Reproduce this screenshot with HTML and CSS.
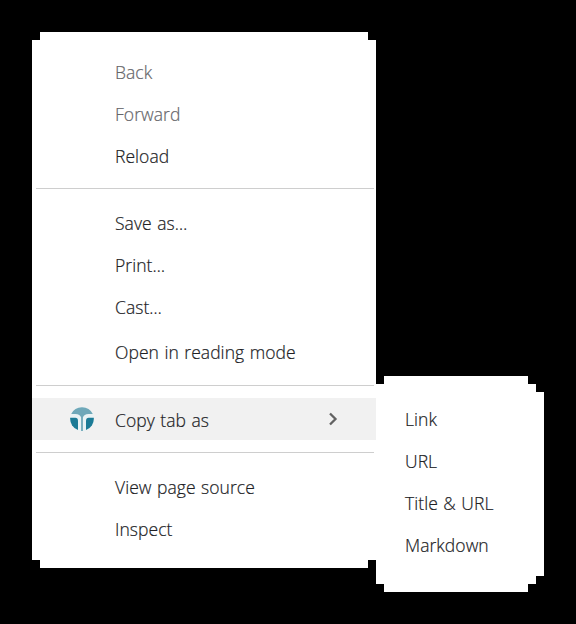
FILE: index.html
```
<!DOCTYPE html>
<html lang="en">
<head>
<meta charset="utf-8">
<title>Context menu</title>
<link rel="stylesheet" href="styles.css">
</head>
<body>
<nav class="menu">
  <div class="item disabled"><span>Back</span></div>
  <div class="item disabled"><span>Forward</span></div>
  <div class="item"><span>Reload</span></div>
  <hr class="sep">
  <div class="item"><span>Save as…</span></div>
  <div class="item"><span>Print…</span></div>
  <div class="item"><span>Cast…</span></div>
  <div class="item reading"><span>Open in reading mode</span></div>
  <hr class="sep sep-mid">
  <div class="item active">
    <svg class="logo" viewBox="0 0 24 24" width="24" height="24">
      <circle cx="12" cy="12" r="12" fill="#e9f3f5"/>
      <path fill="#6fa8b9" d="M1.2 7A12 12 0 0 1 22.8 7H18.5Q14 7 12.9 10.5V24H11.1V10.5Q10 7 5.5 7Z"/>
      <path fill="#1c7b96" d="M.2 10.7H5.3Q8 10.7 8 13.8V23A12 12 0 0 1 .2 10.7Z"/>
      <path fill="#1c7b96" d="M23.8 10.7H18.700Q16 10.7 16 13.8V23A12 12 0 0 0 23.8 10.7Z"/>
    </svg>
    <span>Copy tab as</span>
    <svg class="chevron" viewBox="0 0 10 14" width="10" height="14"><path d="M2 1.500L7.500 7l-5.500 5.500" fill="none" stroke="#626262" stroke-width="2.3"/></svg>
  </div>
  <hr class="sep sep-low">
  <div class="item"><span>View page source</span></div>
  <div class="item"><span>Inspect</span></div>
</nav>
<nav class="submenu">
  <div class="item"><span>Link</span></div>
  <div class="item"><span>URL</span></div>
  <div class="item"><span>Title &amp; URL</span></div>
  <div class="item"><span>Markdown</span></div>
</nav>
</body>
</html>
```
FILE: styles.css
```
* { box-sizing: border-box; }
body {
  margin: 0;
  width: 576px;
  height: 624px;
  padding: 32px;
  display: flex;
  align-items: flex-start;
  overflow: hidden;
  background: #000;
  color: #202124;
  font: 300 17.5px/42px "Open Sans", "Noto Sans", sans-serif;
  -webkit-text-stroke: 0.2px;
  letter-spacing: 0.05px;
  word-spacing: 0.9px;
}
.menu {
  flex: none;
  width: 344px;
  height: 536px;
  padding-top: 20px;
  background: #fff;
  clip-path: polygon(8px 0, 336px 0, 336px 8px, 344px 8px, 344px 528px, 336px 528px, 336px 536px, 8px 536px, 8px 528px, 0 528px, 0 8px, 8px 8px);
}
.submenu {
  flex: none;
  width: 168px;
  height: 216px;
  margin-top: 344px;
  padding-top: 23px;
  background: #fff;
  clip-path: polygon(8px 0, 152px 0, 152px 8px, 160px 8px, 160px 16px, 168px 16px, 168px 200px, 160px 200px, 160px 208px, 152px 208px, 152px 216px, 8px 216px, 8px 208px, 0 208px, 0 8px, 8px 8px);
}
.item {
  display: flex;
  align-items: center;
  height: 42px;
  padding: 0 0 2px 83px;
  white-space: nowrap;
}
.submenu .item { padding-left: 29px; }
.disabled { color: #656569; }
.reading { margin-top: 3px; }
.active { padding: 0 0 0 38px; background: #f1f1f1; }
.active span { padding-top: 2px; }
.logo { margin-right: 21px; }
.chevron { margin: 0 38px 0 auto; }
.sep {
  height: 1px;
  margin: 10px 2px 14px 4px;
  border: 0;
  background: #cecece;
}
.sep-mid { margin-top: 11px; margin-bottom: 12px; }
.sep-low { margin-top: 12px; }
```
